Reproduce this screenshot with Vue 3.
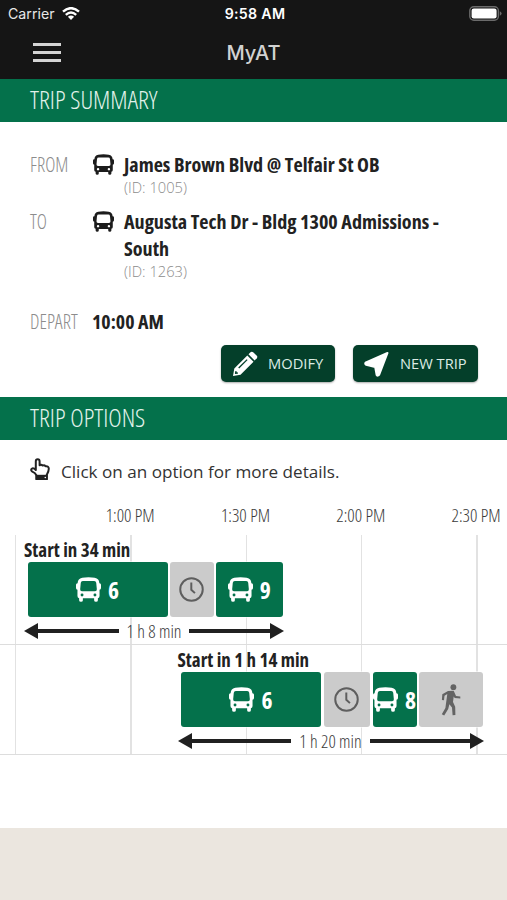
<script setup>
const hours = ['1:00 PM', '1:30 PM', '2:00 PM', '2:30 PM']

const stops = [
  { label: 'FROM', name: 'James Brown Blvd @ Telfair St OB', id: 1005 },
  { label: 'TO', name: 'Augusta Tech Dr - Bldg 1300 Admissions - South', id: 1263 },
]

const options = [
  {
    start: 'Start in 34 min',
    duration: '1 h 8 min',
    offset: 24,
    width: 260,
    legs: [
      { kind: 'bus', route: '6', width: 140 },
      { kind: 'wait', width: 43.5 },
      { kind: 'bus', route: '9', width: 66.5 },
    ],
  },
  {
    start: 'Start in 1 h 14 min',
    duration: '1 h 20 min',
    offset: 177.5,
    width: 306,
    legs: [
      { kind: 'bus', route: '6', width: 140 },
      { kind: 'wait', width: 46.5 },
      { kind: 'bus', route: '8', width: 44 },
      { kind: 'walk', width: 63.5 },
    ],
  },
]
</script>

<template>
  <div class="phone">
    <svg class="defs" width="0" height="0">
      <symbol id="bus" viewBox="0 0 24 24">
        <path fill-rule="evenodd" d="M12 0.3C16.8 0.3 20 1.1 21.2 2.5C22 3.4 22.3 4.6 22.4 6H22.6Q24 6 24 7.5V10.5Q24 12 22.6 12.2V18.3Q22.6 20 21 20.3V22.2Q21 23.8 19.2 23.8Q17.4 23.8 17.4 22.2V20.5H6.6V22.2Q6.6 23.8 4.8 23.8Q3 23.8 3 22.2V20.3Q1.4 20 1.4 18.3V12.2Q0 12 0 10.5V7.5Q0 6 1.4 6H1.6C1.7 4.6 2 3.4 2.8 2.5C4 1.1 7.2 0.3 12 0.3ZM6.5 3.9Q4.8 3.9 4.6 5.6L4 11.8Q3.9 13.7 5.7 13.7H18.3Q20.1 13.7 20 11.8L19.4 5.6Q19.2 3.9 17.5 3.9ZM5.8 15.9A1.4 1.4 0 1 0 5.8 18.7A1.4 1.4 0 1 0 5.8 15.9ZM18.2 15.9A1.4 1.4 0 1 0 18.2 18.7A1.4 1.4 0 1 0 18.2 15.9Z" />
      </symbol>
    </svg>

    <header class="topbar">
      <div class="status">
        <div class="carrier">
          <span>Carrier</span>
          <svg class="wifi" viewBox="0 0 18 13">
            <path d="M1 4.7Q9 -2.4 17 4.7M3.8 7.8Q9 3.3 14.2 7.8" fill="none" stroke="#fff" stroke-width="2.4" />
            <path d="M5.9 9.8Q9 7.2 12.1 9.8L9 13Z" fill="#fff" />
          </svg>
        </div>
        <span class="clock">9:58 AM</span>
        <svg class="battery" viewBox="0 0 33 15">
          <rect x="0.8" y="0.8" width="28.6" height="13.4" rx="4" fill="none" stroke="#6b6b6b" stroke-width="1.4" />
          <rect x="2.6" y="2.6" width="25" height="9.8" rx="2.2" fill="#fff" />
          <path d="M30.8 5.2Q32.6 6 32.6 7.5Q32.6 9 30.8 9.8Z" fill="#6b6b6b" />
        </svg>
      </div>
      <div class="nav">
        <div class="burger"><i></i><i></i><i></i></div>
        <h1>MyAT</h1>
      </div>
    </header>

    <h2 class="band">TRIP SUMMARY</h2>
    <section class="summary">
      <div v-for="stop in stops" :key="stop.id" class="stop">
        <span class="label">{{ stop.label }}</span>
        <svg class="stop-icon"><use href="#bus" /></svg>
        <div class="place">
          <strong>{{ stop.name }}</strong>
          <small>(ID: {{ stop.id }})</small>
        </div>
      </div>
      <div class="depart">
        <span class="label">DEPART</span>
        <strong>10:00 AM</strong>
      </div>
      <div class="actions">
        <button class="modify">
          <svg viewBox="0 0 26 26">
            <path fill="#fff" fill-rule="evenodd" d="M1 25L2.3 17.5L15.3 4.5L21.5 10.7L8.5 23.7ZM3.2 20.2L2.9 23.1L5.8 22.8L6 21.4L4.6 21.3L4.5 20ZM6.2 16.6L7.2 17.5L15.6 9.1L14.7 8.2Z" />
            <path fill="#fff" d="M16.5 3.3L18.8 1.1Q20 0.2 21.2 1.2L24.8 4.8Q25.8 6 24.8 7.2L22.6 9.4Z" />
          </svg>
          <span>MODIFY</span>
        </button>
        <button class="new-trip">
          <svg viewBox="0 0 26 26">
            <path d="M23.5 2L15.2 23.7Q13.8 25.5 12.6 23.8L11.2 16L2.2 13.8Q0.3 12.7 2 11.3Z" fill="#fff" stroke="#fff" stroke-width="2" stroke-linejoin="round" />
          </svg>
          <span>NEW TRIP</span>
        </button>
      </div>
    </section>

    <h2 class="band">TRIP OPTIONS</h2>
    <section>
      <p class="hint">
        <svg viewBox="0 0 20 23">
          <path d="M5.8 12V3.4Q5.8 1.2 7.7 1.2Q9.6 1.2 9.6 3.4V7.3Q11.3 6.2 12.6 7.6Q14.4 6.7 15.5 8.3Q18.8 7.8 18.8 10.8Q18.8 13.4 16.8 16.8V21H6.5V17.3Q5.5 14.8 1.9 13.3Q0.6 12.2 1.8 10.7Q3.4 9.5 5.8 12Z" fill="#fff" stroke="#222" stroke-width="2" stroke-linejoin="round" />
          <path d="M5.5 16.8H17.7V22H5.5Z" fill="#222" />
          <circle cx="15.3" cy="19.5" r="0.8" fill="#fff" />
        </svg>
        <span>Click on an option for more details.</span>
      </p>
      <div class="hours"><span v-for="hour in hours" :key="hour">{{ hour }}</span></div>
      <div class="timeline">
        <article v-for="option in options" :key="option.start" class="option">
          <div class="trip" :style="{ marginLeft: option.offset + 'px', width: option.width + 'px' }">
            <strong class="start">{{ option.start }}</strong>
            <div class="legs">
              <div
                v-for="(leg, i) in option.legs"
                :key="i"
                class="leg"
                :class="leg.kind"
                :style="{ width: leg.width + 'px' }"
              >
                <template v-if="leg.kind === 'bus'">
                  <svg class="leg-bus"><use href="#bus" /></svg>
                  <b>{{ leg.route }}</b>
                </template>
                <svg v-else-if="leg.kind === 'wait'" class="leg-clock" viewBox="0 0 24 24">
                  <circle cx="12" cy="12" r="10.8" />
                  <path d="M11.8 5.2V12.2L15.3 15.5" />
                </svg>
                <svg v-else class="leg-walk" viewBox="0 0 20 32">
                  <circle cx="12.4" cy="3.2" r="2.9" />
                  <path d="M7 6.9L12.7 6.8L15 12L19.3 12.4V14.5L13.7 14L12.7 12.4L12 18L14.2 22.7L14.4 31L11.6 31.3L11 23.6L8.4 20.2L7.2 25L3.2 31.6L.8 30.2L4.4 24.1L6.3 10L3.5 11.7L3 16.2L.9 16L1.3 10.3Z" />
                </svg>
              </div>
            </div>
            <div class="span">
              <i class="arrow left"></i>
              <span>{{ option.duration }}</span>
              <i class="arrow right"></i>
            </div>
          </div>
        </article>
      </div>
    </section>
    <footer class="footer"></footer>
  </div>
</template>

<style>
body { margin: 0; background: #fff; }
</style>

<style scoped>
* { box-sizing: border-box; }
.phone { display: flex; flex-direction: column; width: 507px; height: 900px; overflow: hidden; background: #fff; color: #222; font-family: "Open Sans", "Noto Sans", sans-serif; }
.defs { position: absolute; }
.topbar { height: 79px; flex: none; background: #151515; color: #fff; font-family: Inter, "Liberation Sans", sans-serif; }
.status { display: grid; grid-template-columns: 1fr auto 1fr; align-items: center; height: 27px; padding: 0 5px 0 8px; }
.carrier { display: flex; align-items: center; gap: 7px; font-size: 14.2px; color: #e8e8e8; }
.wifi { width: 18px; height: 13px; }
.clock { font-size: 14.2px; font-weight: 600; letter-spacing: .3px; }
.battery { width: 33px; height: 15px; justify-self: end; }
.nav { display: grid; grid-template-columns: 1fr auto 1fr; align-items: center; height: 51px; padding-left: 33px; padding-right: 33px; }
.burger { display: flex; flex-direction: column; gap: 5px; width: 28px; }
.burger i { height: 3px; background: #d4d4d4; }
.nav h1 { margin: 0; font-size: 20px; font-weight: 500; color: #d2d2d2; }
.band { flex: none; height: 43px; margin: 0; padding-left: 30px; background: #04714b; color: #e2f3eb; font-size: 25.5px; line-height: 41px; font-weight: 300; font-stretch: 75%; }
.summary { height: 275px; padding: 29px 29px 0 30px; }
.stop { display: grid; grid-template-columns: 63px 31px 1fr; margin-bottom: 3px; }
.label { color: #8c8c8c; font-size: 19.3px; line-height: 27px; font-weight: 300; font-stretch: 75%; }
.stop-icon { width: 21px; height: 21px; margin-top: 3px; fill: #1c1c1c; }
.place strong, .depart strong { display: block; font-size: 20.1px; line-height: 27px; font-weight: 700; font-stretch: 75%; }
.place { padding-right: 30px; }
.place small { display: block; color: #8c8c8c; font-size: 14.7px; line-height: 18px; height: 27px; font-weight: 300; }
.depart { display: grid; grid-template-columns: 62px 1fr; margin-top: 19px; }
.depart strong { font-size: 19.9px; }
.actions { display: flex; justify-content: flex-end; gap: 18px; margin-top: 10px; }
.actions button { display: flex; align-items: center; height: 37px; padding: 0 0 0 11px; border: 0; border-radius: 5px; background: #043f2a; box-shadow: 0 1px 2px #0005; color: #dcebe4; font: 400 14.7px "Open Sans", sans-serif; white-space: nowrap; }
.actions svg { width: 26px; height: 26px; flex: none; margin-right: 10px; }
.actions span { margin-bottom: 2px; }
.modify { width: 114px; }
.new-trip { width: 125px; }
.hint { display: flex; align-items: center; gap: 11px; height: 62px; margin: 0; padding-left: 30px; font-size: 17.1px; color: #333; }
.hint svg { width: 20px; height: 23px; margin-bottom: 3px; }
.hours { display: flex; height: 33px; padding-left: 72.5px; color: #3a3a3a; font-size: 18.2px; line-height: 27px; font-weight: 300; font-stretch: 75%; }
.hours span { width: 115.3px; flex: none; text-align: center; }
.timeline { background: repeating-linear-gradient(to right, #e2e2e2 0 1.5px, transparent 1.5px 115.3px) 15px 0 / 492px 100% no-repeat; }
.option { height: 110px; padding-top: 3px; border-bottom: 1.5px solid #ddd; }
.start { display: block; height: 24px; font-size: 19px; line-height: 24px; font-weight: 700; font-stretch: 75%; white-space: nowrap; }
.legs { display: flex; gap: 2.5px; padding-left: 3.5px; }
.leg { display: flex; flex: none; align-items: center; justify-content: center; gap: 7px; height: 55px; border-radius: 3px; background: #cbcbcb; box-shadow: 0 0 0 1px #fff8; }
.leg.bus { background: #04714b; color: #fff; }
.leg b { font-size: 23.5px; line-height: 30px; font-stretch: 75%; }
.leg-bus { flex: none; width: 25px; height: 25px; fill: #fff; }
.leg-clock { width: 25px; height: 25px; fill: none; stroke: #5e5e5e; stroke-width: 1.9; }
.leg-walk { width: 20px; height: 32px; fill: #636363; }
.span { display: flex; align-items: center; gap: 8px; height: 27px; color: #3a3a3a; font-size: 18px; font-weight: 300; font-stretch: 75%; white-space: nowrap; }
.arrow { display: flex; align-items: center; flex: 1; }
.arrow::before, .arrow::after { content: ""; }
.arrow.left::before { border: 8px solid transparent; border-left: 0; border-right: 14px solid #202020; }
.arrow.right::after { border: 8px solid transparent; border-right: 0; border-left: 14px solid #202020; }
.arrow.left::after, .arrow.right::before { flex: 1; height: 4px; background: #202020; }
.footer { height: 72px; flex: none; margin-top: auto; background: #ebe6df; }
</style>
